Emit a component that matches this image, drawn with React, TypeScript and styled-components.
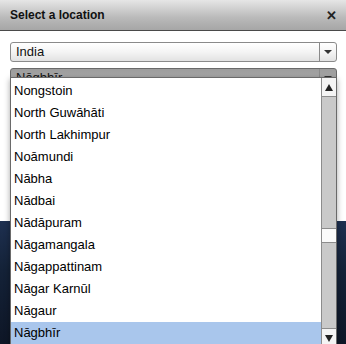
import React from "react";
import styled, { createGlobalStyle } from "styled-components";

const GlobalStyle = createGlobalStyle`
  html, body {
    margin: 0;
    padding: 0;
    background: #ffffff;
    font-family: "Liberation Sans", Arial, sans-serif;
  }
`;

const Page = styled.div`
  position: relative;
  width: 346px;
  height: 344px;
  overflow: hidden;
  display: flex;
  flex-direction: column;
`;

const TitleBar = styled.div`
  height: 30px;
  border-bottom: 1px solid #4a4a4a;
  background: linear-gradient(#e6e6e6, #b9b9b9 60%, #a6a6a6);
  display: flex;
  align-items: center;
  justify-content: space-between;
  padding: 0 9px 0 10px;
  font-size: 12px;
  font-weight: bold;
  color: #111;
`;

const CloseButton = styled.span`
  font-size: 13px;
  font-weight: bold;
  color: #222;
  line-height: 1;
`;

const Body = styled.div`
  height: 179px;
  background: #fff;
  padding: 11px 9px 0 10px;
  display: flex;
  flex-direction: column;
  gap: 6px;
`;

const SelectBox = styled.div<{ $pressed?: boolean }>`
  height: 18px;
  border: 1px solid ${(p) => (p.$pressed ? "#6a6a6a" : "#8a8a8a")};
  border-radius: 3px;
  background: ${(p) =>
    p.$pressed
      ? "linear-gradient(#9c9c9c, #b4b4b4)"
      : "linear-gradient(#ffffff, #f4f4f4 50%, #e2e2e2)"};
  display: flex;
  align-items: stretch;
  font-size: 13px;
  color: #111;
`;

const SelectText = styled.div`
  flex: 1;
  padding-left: 5px;
  line-height: 18px;
`;

const SelectArrow = styled.div`
  width: 16px;
  border-left: 1px solid #8a8a8a;
  display: flex;
  align-items: center;
  justify-content: center;
  &::after {
    content: "";
    border-left: 4px solid transparent;
    border-right: 4px solid transparent;
    border-top: 4px solid #333;
  }
`;

const Backdrop = styled.div`
  flex: 1;
  background: linear-gradient(180deg, #1e3050 0%, #142238 40%, #0e1626 100%);
`;

const DropList = styled.div`
  position: absolute;
  top: 77px;
  left: 10px;
  width: 325px;
  height: 269px;
  border: 1px solid #6a6a6a;
  background: #fff;
  display: flex;
  box-shadow: 0 2px 6px rgba(0, 0, 0, 0.35);
`;

const Items = styled.div`
  flex: 1;
  padding-top: 2px;
  display: flex;
  flex-direction: column;
`;

const Item = styled.div<{ $selected?: boolean }>`
  height: 22px;
  line-height: 22px;
  padding-left: 3px;
  font-size: 13px;
  color: #000;
  background: ${(p) => (p.$selected ? "#a9c6ec" : "transparent")};
`;

const ScrollBar = styled.div`
  width: 14px;
  border-left: 1px solid #8c8c8c;
  background: #c9c9c9;
  display: flex;
  flex-direction: column;
`;

const ScrollButton = styled.div<{ $down?: boolean }>`
  height: 18px;
  background: #f4f4f4;
  border-bottom: ${(p) => (p.$down ? "none" : "1px solid #8c8c8c")};
  border-top: ${(p) => (p.$down ? "1px solid #8c8c8c" : "none")};
  display: flex;
  align-items: center;
  justify-content: center;
  &::after {
    content: "";
    border-left: 4px solid transparent;
    border-right: 4px solid transparent;
    ${(p) =>
      p.$down ? "border-top: 7px solid #222;" : "border-bottom: 7px solid #222;"}
  }
`;

const Track = styled.div`
  flex: 1;
  display: flex;
  flex-direction: column;
  padding-top: 131px;
`;

const Thumb = styled.div`
  height: 13px;
  background: #fafafa;
  border-top: 1px solid #8c8c8c;
  border-bottom: 1px solid #8c8c8c;
`;

const cities = [
  "Nongstoin",
  "North Guwāhāti",
  "North Lakhimpur",
  "Noāmundi",
  "Nābha",
  "Nādbai",
  "Nādāpuram",
  "Nāgamangala",
  "Nāgappattinam",
  "Nāgar Karnūl",
  "Nāgaur",
  "Nāgbhīr",
];

export default function App() {
  const selected = "Nāgbhīr";
  return (
    <Page>
      <GlobalStyle />
      <TitleBar>
        <span>Select a location</span>
        <CloseButton>✕</CloseButton>
      </TitleBar>
      <Body>
        <SelectBox>
          <SelectText>India</SelectText>
          <SelectArrow />
        </SelectBox>
        <SelectBox $pressed>
          <SelectText>{selected}</SelectText>
          <SelectArrow />
        </SelectBox>
      </Body>
      <Backdrop />
      <DropList>
        <Items>
          {cities.map((c) => (
            <Item key={c} $selected={c === selected}>
              {c}
            </Item>
          ))}
        </Items>
        <ScrollBar>
          <ScrollButton />
          <Track>
            <Thumb />
          </Track>
          <ScrollButton $down />
        </ScrollBar>
      </DropList>
    </Page>
  );
}
